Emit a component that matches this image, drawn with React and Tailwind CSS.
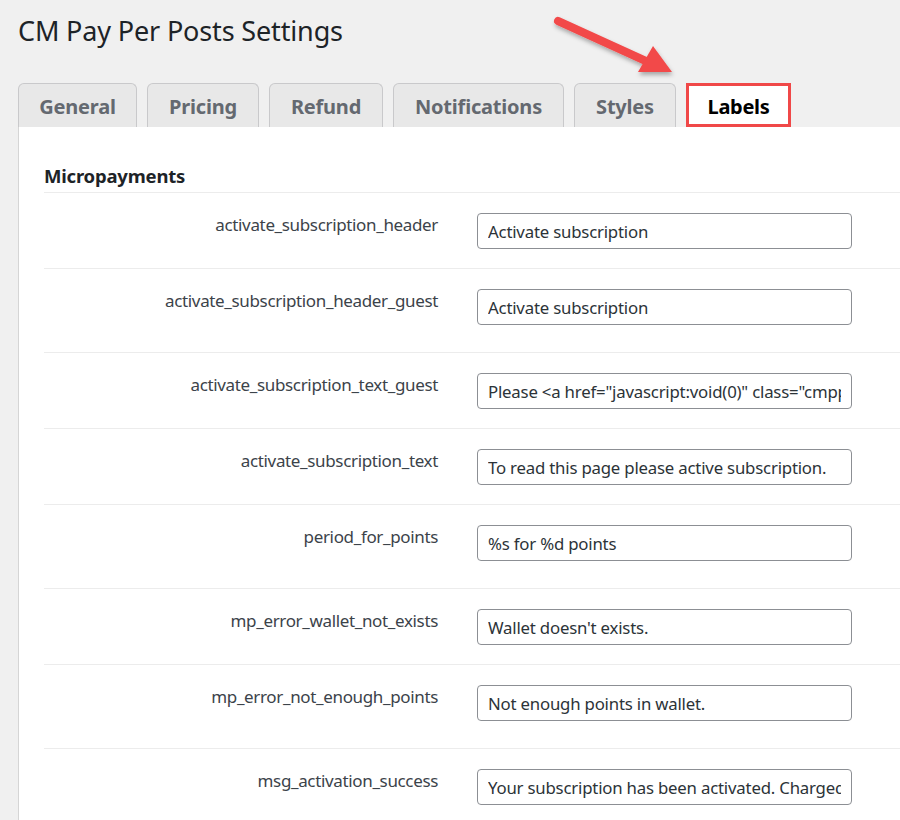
import React from 'react';

const tabs = [
  { label: 'General', w: 'w-[119px]' },
  { label: 'Pricing', w: 'w-[112px]' },
  { label: 'Refund', w: 'w-[114px]' },
  { label: 'Notifications', w: 'w-[171px]' },
  { label: 'Styles', w: 'w-[102px]' },
];

const rows = [
  { key: 'activate_subscription_header', value: 'Activate subscription', pb: 'pb-[19px]' },
  { key: 'activate_subscription_header_guest', value: 'Activate subscription', pb: 'pb-[27px]' },
  { key: 'activate_subscription_text_guest', value: 'Please <a href="javascript:void(0)" class="cmppp-login">login</a>', pb: 'pb-[19px]' },
  { key: 'activate_subscription_text', value: 'To read this page please active subscription.', pb: 'pb-[19px]' },
  { key: 'period_for_points', value: '%s for %d points', pb: 'pb-[27px]' },
  { key: 'mp_error_wallet_not_exists', value: "Wallet doesn't exists.", pb: 'pb-[19px]' },
  { key: 'mp_error_not_enough_points', value: 'Not enough points in wallet.', pb: 'pb-[27px]' },
  { key: 'msg_activation_success', value: 'Your subscription has been activated. Charged %d points.', pb: 'pb-[27px]' },
];

const Arrow = () => (
  <svg className="absolute left-[540px] top-[8px]" width="150" height="80" viewBox="540 8 150 80">
    <defs>
      <filter id="sh" x="-20%" y="-20%" width="140%" height="160%">
        <feDropShadow dx="1" dy="3" stdDeviation="2" floodColor="#000" floodOpacity="0.3" />
      </filter>
    </defs>
    <g filter="url(#sh)">
      <line x1="558" y1="21" x2="648" y2="62" stroke="#f24949" strokeWidth="8" strokeLinecap="round" />
      <polygon points="672,72 638,72 653,46" fill="#f24949" />
    </g>
  </svg>
);

const App = () => {
  return (
    <div className="relative w-[900px] h-[820px] overflow-hidden bg-[#f0f0f0] font-['Noto_Sans',sans-serif]">
      <Arrow />
      <div className="pl-[18px] pt-[11px]">
        <h1 className="text-[27px] leading-[40px] text-[#1d2327] tracking-[-0.15px]">CM Pay Per Posts Settings</h1>

        <div className="flex gap-[10px] mt-[32px] h-[44px]">
          {tabs.map((t) => (
            <div
              key={t.label}
              className={`${t.w} text-center pt-[8px] border border-b-0 border-[#c9c9cb] rounded-t-[6px] bg-[#e8e8e8] text-[20px] font-bold text-[#646970] leading-[30px] tracking-[-0.2px]`}
            >
              {t.label}
            </div>
          ))}
          <div className="w-[105px] text-center pt-[7px] border-[3px] border-[#f04848] bg-white text-[20px] font-bold text-black leading-[28px] tracking-[-0.3px]">
            Labels
          </div>
        </div>

        <div className="bg-white border-l border-[#d5d5d5] pl-[25px] pt-[36px] h-[700px]">
          <h2 className="text-[18.5px] font-bold text-[#1d2327] leading-[26px] pb-[3px] border-b border-[#ececec] tracking-[-0.2px]">
            Micropayments
          </h2>
          {rows.map((r) => (
            <div key={r.key} className={`flex pt-5 ${r.pb} border-b border-[#ececec]`}>
              <div className="w-[394px] text-right text-[17px] leading-[24px] text-[#3c434a] tracking-[-0.35px]">
                {r.key}
              </div>
              <input
                readOnly
                value={r.value}
                className="ml-[39px] w-[375px] h-[36px] rounded-[4px] border border-[#8c8f94] px-[10px] bg-white outline-none text-[16.8px] text-[#2c3338] tracking-[-0.2px] font-['Noto_Sans',sans-serif]"
              />
            </div>
          ))}
        </div>
      </div>
    </div>
  );
};

export default App;
